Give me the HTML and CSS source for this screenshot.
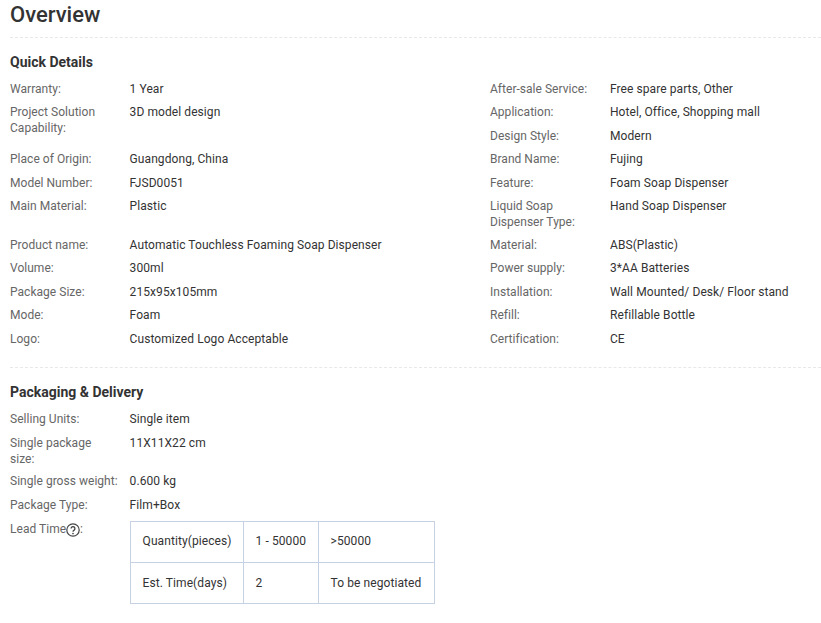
FILE: index.html
```html
<!DOCTYPE html>
<html lang="en">
<head>
<meta charset="utf-8">
<title>Overview</title>
<link rel="stylesheet" href="styles.css">
</head>
<body>
<main class="page">
  <h1 class="title">Overview</h1>
  <section class="section">
    <h2 class="heading">Quick Details</h2>
    <div class="grid">
      <div class="k">Warranty:</div><div class="v">1 Year</div>
      <div class="k">After-sale Service:</div><div class="v">Free spare parts, Other</div>
      <div class="k span">Project Solution Capability:</div><div class="v span">3D model design</div>
      <div class="k">Application:</div><div class="v">Hotel, Office, Shopping mall</div>
      <div class="k">Design Style:</div><div class="v">Modern</div>
      <div class="k">Place of Origin:</div><div class="v">Guangdong, China</div>
      <div class="k">Brand Name:</div><div class="v">Fujing</div>
      <div class="k">Model Number:</div><div class="v">FJSD0051</div>
      <div class="k">Feature:</div><div class="v">Foam Soap Dispenser</div>
      <div class="k">Main Material:</div><div class="v">Plastic</div>
      <div class="k">Liquid Soap Dispenser Type:</div><div class="v">Hand Soap Dispenser</div>
      <div class="k">Product name:</div><div class="v">Automatic Touchless Foaming Soap Dispenser</div>
      <div class="k">Material:</div><div class="v">ABS(Plastic)</div>
      <div class="k">Volume:</div><div class="v">300ml</div>
      <div class="k">Power supply:</div><div class="v">3*AA Batteries</div>
      <div class="k">Package Size:</div><div class="v">215x95x105mm</div>
      <div class="k">Installation:</div><div class="v">Wall Mounted/ Desk/ Floor stand</div>
      <div class="k">Mode:</div><div class="v">Foam</div>
      <div class="k">Refill:</div><div class="v">Refillable Bottle</div>
      <div class="k">Logo:</div><div class="v">Customized Logo Acceptable</div>
      <div class="k">Certification:</div><div class="v">CE</div>
    </div>
  </section>
  <section class="section">
    <h2 class="heading heading-packaging">Packaging &amp; Delivery</h2>
    <div class="list">
      <div class="k">Selling Units:</div><div class="v">Single item</div>
      <div class="k">Single package<br>size:</div><div class="v">11X11X22 cm</div>
      <div class="k">Single gross weight:</div><div class="v">0.600 kg</div>
      <div class="k">Package Type:</div><div class="v">Film+Box</div>
      <div class="k">Lead Time<svg class="help" viewBox="0 0 14 14" width="14" height="14" aria-hidden="true"><circle cx="7" cy="7" r="6.2" fill="none" stroke="#444" stroke-width="1.2"/><path d="M5.1 5.5a1.9 1.9 0 1 1 3 1.6c-.8.5-1.1.9-1.1 1.6" fill="none" stroke="#444" stroke-width="1.3"/><circle cx="7" cy="10.5" r=".85" fill="#444"/></svg>:</div>
      <div class="v">
        <table class="lead">
          <tr class="r1"><td class="c1">Quantity(pieces)</td><td class="c2">1 - 50000</td><td class="c3">&gt;50000</td></tr>
          <tr class="r2"><td class="c1">Est. Time(days)</td><td class="c2">2</td><td class="c3">To be negotiated</td></tr>
        </table>
      </div>
    </div>
  </section>
</main>
</body>
</html>
```
FILE: styles.css
```css
* { box-sizing: border-box; }
html, body { margin: 0; padding: 0; background: #fff; }
body { font-family: Roboto, "Liberation Sans", sans-serif; font-size: 12px; line-height: 16px; letter-spacing: .08px; color: #333; }
.page { padding-left: 10px; }
.title {
  margin: 0;
  height: 38px;
  padding-top: 1px;
  font-size: 22px;
  line-height: 28px;
  font-weight: 500;
  letter-spacing: 0;
  color: #333;
  border-bottom: 1px dashed #e8e8e8;
}
.section { padding-bottom: 12.5px; border-bottom: 1px dashed #e8e8e8; }
.section + .section { border-bottom: 0; }
.heading { margin: 0; padding: 16px 0 10.75px; font-size: 14px; line-height: 16px; font-weight: 700; letter-spacing: 0; color: #333; }
.heading-packaging { padding-bottom: 11.25px; }
.grid {
  display: grid;
  grid-template-columns: 119.6px 360.4px 120px 1fr;
  grid-auto-rows: minmax(23.5px, auto);
}
.grid .k, .grid .v { padding-bottom: 6.5px; }
.list {
  display: grid;
  grid-template-columns: 119.6px 1fr;
  grid-auto-rows: minmax(24px, auto);
}
.k { color: #666; padding: 0 8px 6px 0; letter-spacing: .03px; }
.v { color: #333; padding: 0 0 6px 0; }
.span { grid-row: span 2; }
.help { vertical-align: -4px; }
.lead { border-collapse: collapse; table-layout: fixed; width: 304px; }
.lead td { border: 1px solid #c6d2e4; padding: 12px; white-space: nowrap; }
.r1 td { height: 41px; padding-top: 11px; padding-bottom: 13px; }
.r2 td { height: 40px; }
.c1 { width: 113px; }
.c2 { width: 75px; }
.c3 { width: 116px; }
```
